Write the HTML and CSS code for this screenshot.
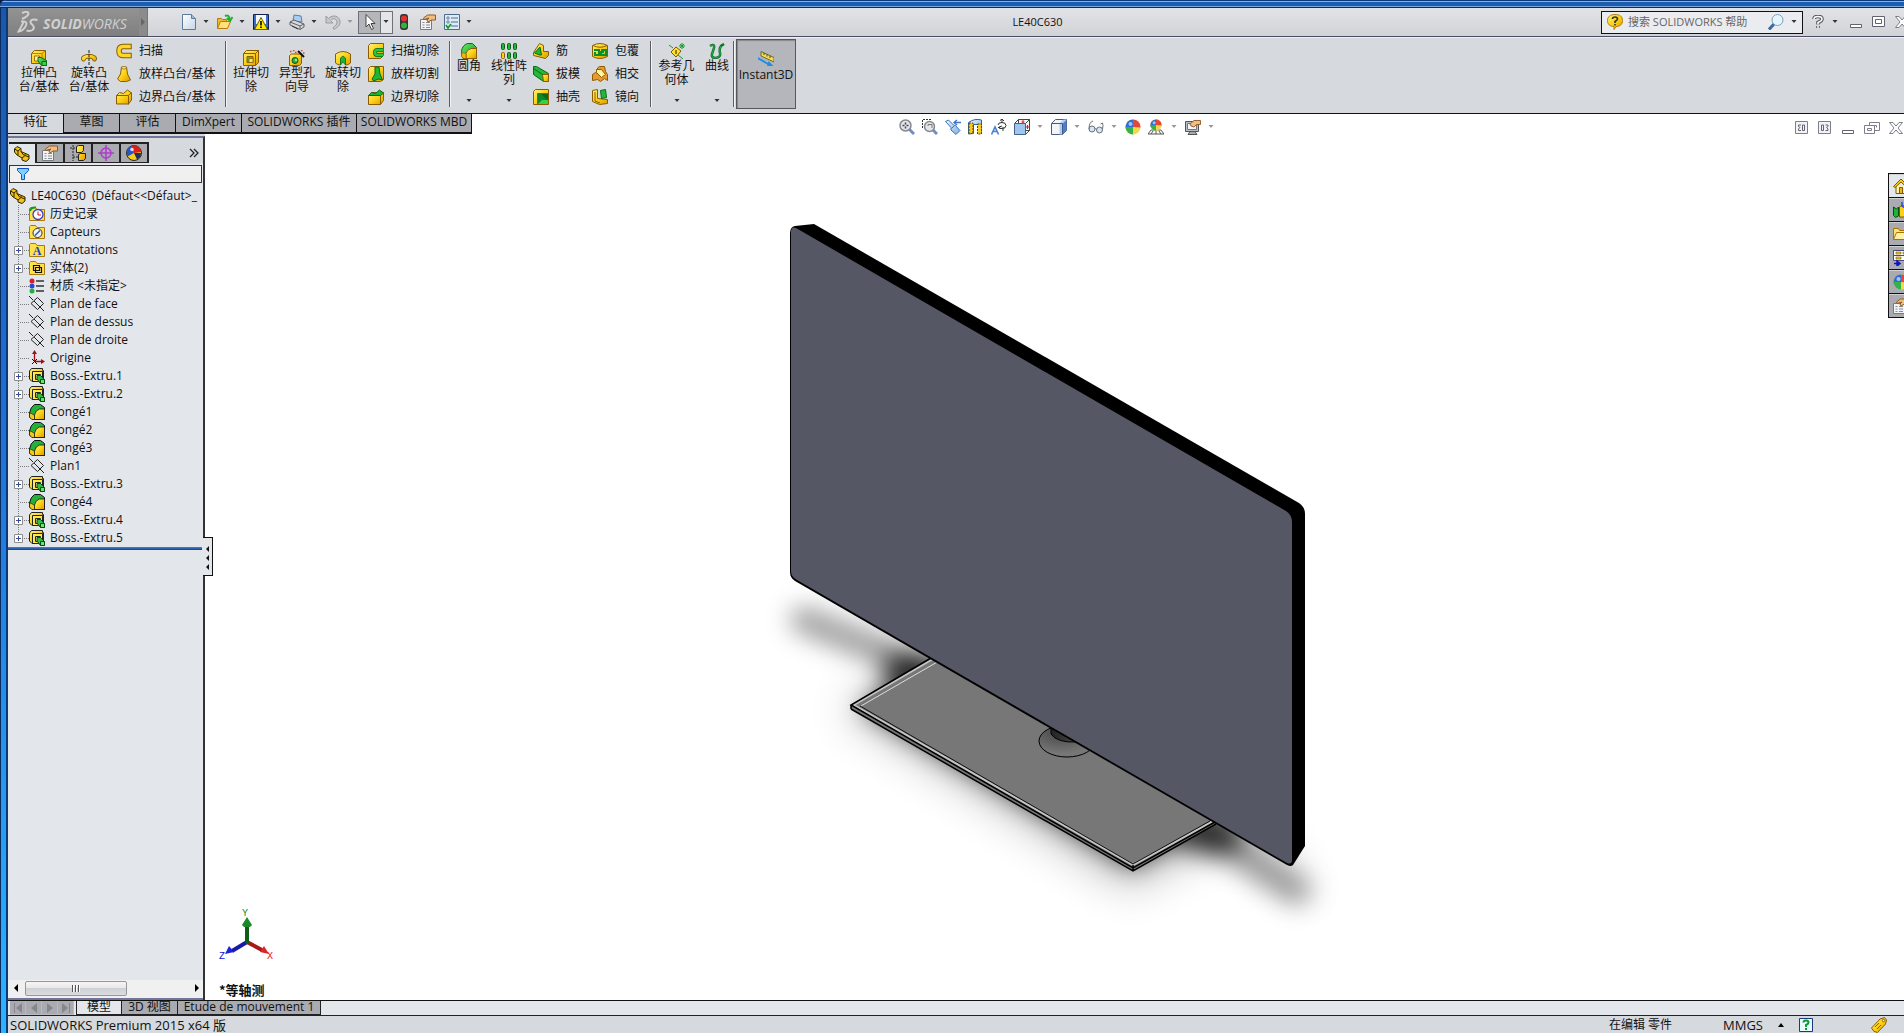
FILE: index.html
```html
<!DOCTYPE html>
<html lang="zh-CN">
<head>
<meta charset="utf-8">
<title>LE40C630</title>
<link rel="stylesheet" href="styles.css">
</head>
<body>
<svg class="defs" aria-hidden="true">
  <defs>
    <linearGradient id="gold" x1="0" y1="0" x2="1" y2="1"><stop offset="0" stop-color="#fff27a"/><stop offset=".5" stop-color="#fcd116"/><stop offset="1" stop-color="#d99a00"/></linearGradient>
    <linearGradient id="green" x1="0" y1="0" x2="1" y2="1"><stop offset="0" stop-color="#6be36b"/><stop offset="1" stop-color="#08a020"/></linearGradient>
    <linearGradient id="sky" x1="0" y1="0" x2="1" y2="1"><stop offset="0" stop-color="#e8f4ff"/><stop offset="1" stop-color="#7db0e6"/></linearGradient>
    <linearGradient id="paper" x1="0" y1="0" x2="1" y2="1"><stop offset="0" stop-color="#fff"/><stop offset="1" stop-color="#c3d6e8"/></linearGradient>
  </defs>
  <symbol id="caret" viewBox="0 0 10 6"><path d="M2.500 1h5L5 4z"/></symbol>
  <symbol id="new" viewBox="0 0 16 16"><path d="M1.500.5h9l4 4v11h-13z" fill="url(#paper)" stroke="#5d7c9c"/><path d="M10.500.5v4h4" fill="#9fb9d3" stroke="#5d7c9c"/></symbol>
  <symbol id="open" viewBox="0 0 16 16"><path d="M.5 14.500v-10h4l1 1h4v3" fill="#f0b72c" stroke="#b87a08"/><path d="M.5 14.500l3-7h10l-3 7z" fill="#ffe37a" stroke="#b87a08"/><path d="M8 2q4-2 4.500 3M10 4l3 3 2.500-4" fill="none" stroke="#21b02c" stroke-width="2"/></symbol>
  <symbol id="save" viewBox="0 0 16 16"><path d="M.5.5h15v15h-15z" fill="#3f6cc4" stroke="#10204e"/><path d="M3 1h10v9H3z" fill="#f4f7fc"/><path d="M1 14.500h14" stroke="#10204e" stroke-width="2"/><path d="M8 3.500l6.500 12h-13z" fill="#ffea00" stroke="#6a6000"/><path d="M7.200 7h1.600v4.500H7.200zM7.200 12.500h1.600V14H7.200z" fill="#000"/></symbol>
  <symbol id="print" viewBox="0 0 16 16"><path d="M4 7l1-6 7 1 1 6z" fill="#a9cdf3" stroke="#5b7fa8"/><path d="M1 8l4-2 10 4v3l-4 2.500L1 11z" fill="#d7d9dd" stroke="#5e6167"/><path d="M1 8l10 4 4-2M11 12v3" fill="none" stroke="#5e6167"/><path d="M3 12l6 3" stroke="#333"/></symbol>
  <symbol id="undo" viewBox="0 0 16 16"><path d="M1 2v7h7L5.500 6.500C8 3.500 12 5 12 8c0 3-2 4-4 5.500l1 2C13 13 15.500 11 15 7 14 2 8 0 3.500 4.500z" fill="#c5c7cb" stroke="#9a9ca1"/></symbol>
  <symbol id="cursor" viewBox="0 0 16 16"><path d="M5 .5v12.500l3-3 2.500 5.500 2-1-2.500-5h4z" fill="#fff" stroke="#444"/></symbol>
  <symbol id="traffic" viewBox="0 0 16 16"><rect x="4" y="0" width="8" height="16" rx="3" fill="#3a3335"/><circle cx="8" cy="4.500" r="3" fill="#e33232"/><circle cx="8" cy="11.500" r="3" fill="#29b63a"/></symbol>
  <symbol id="props" viewBox="0 0 16 16"><path d="M.5 5.500h11v10H.5z" fill="#f2f3f5" stroke="#777a80"/><path d="M2.500 8.500h2M6 8.500h4M2.500 11h2M6 11h4M2.500 13.500h2M6 13.500h4" stroke="#888b92"/><path d="M3.500 4l4-3h8v5h-4L8 8 7 6l2-2-5 1.500z" fill="#f0bd83" stroke="#8d5a28"/></symbol>
  <symbol id="list" viewBox="0 0 16 16"><path d="M.5.5h15v15H.5z" fill="#dcebf8" stroke="#4e6c8e"/><path d="M3 3h2v2H3zM3 7h2v2H3z" fill="#fff" stroke="#4e6c8e" stroke-width=".8"/><path d="M7 4h7M7 8h7M7 12h7" stroke="#4e6c8e"/><path d="M2 11l2 3 3-4" fill="none" stroke="#0a9b20" stroke-width="1.600"/></symbol>
  <symbol id="extrude" viewBox="0 0 16 16"><path d="M.5 3.500l3-3h11v9l-3 4H.5z" fill="url(#gold)" stroke="#8c5c00"/><path d="M.5 3.500h10.500v10M11 3.500l3.500-3" fill="none" stroke="#a87400" stroke-width=".8"/><path d="M3.500 6h5v5h-5z" fill="#fff2a0" stroke="#8c5c00" stroke-width=".8"/><path d="M7 7.500h3l5.500 3v5h-5L7 11z" fill="url(#green)" stroke="#0b6a18"/><path d="M11 11.500h4.500v4H11z" fill="#3ad04c" stroke="#0b6a18"/></symbol>
  <symbol id="extrude-dark" viewBox="0 0 16 16"><path d="M.5 3l2-2.500h11v2h1v11H3L.5 11z" fill="url(#gold)" stroke="#222"/><path d="M3.500 3.500h10v10h-10z" fill="#ffe84e" stroke="#222"/><path d="M6.500 6.500h5v5h-5z" fill="#fff6a8" stroke="#222"/><path d="M8 7.500h3.500l4 4v4h-4L8 11z" fill="#30c046" stroke="#064d10"/><path d="M11.500 11.500h4v4h-4z" fill="#6be37a" stroke="#064d10"/></symbol>
  <symbol id="revolve" viewBox="0 0 16 16"><path d="M5 8.500Q4 12 1.500 11-.5 9 1 6.500 8 2 15 6.500q1.500 2.500-.5 4.500-2.500 1-3.500-2.500-3-1-6 0z" fill="url(#gold)" stroke="#8c5c00"/><path d="M8 0v16" stroke="#222" stroke-dasharray="3 1"/></symbol>
  <symbol id="sweep" viewBox="0 0 16 16"><path d="M13 3.500H7q-4 0-4 4.500t4 4.500h6" fill="none" stroke="#8c5c00" stroke-width="5.500" stroke-linecap="square"/><path d="M13 3.500H7q-4 0-4 4.500t4 4.500h6" fill="none" stroke="#fcd62c" stroke-width="3.500" stroke-linecap="square"/></symbol>
  <symbol id="loft" viewBox="0 0 16 16"><path d="M5.500 1h5l1 7 3 6-4 1.500h-6L1.500 13l3-5z" fill="url(#gold)" stroke="#8c5c00"/><ellipse cx="8" cy="1.800" rx="2.500" ry="1.200" fill="#fff3a0" stroke="#8c5c00" stroke-width=".7"/></symbol>
  <symbol id="boundary" viewBox="0 0 16 16"><path d="M.5 6.500l3-3 4 1 4-3.500 4 3v7l-3 4H.5z" fill="url(#gold)" stroke="#8c5c00"/><path d="M.5 6.500h12l3-3M12.500 6.500v9" fill="none" stroke="#8c5c00"/></symbol>
  <symbol id="cut-boundary" viewBox="0 0 16 16"><path d="M.5 6.500l3-3h12v8l-3 4H.5z" fill="url(#gold)" stroke="#8c5c00"/><path d="M.5 6.500l3-3 4 1 4-3.500 4 3-3 2.500z" fill="#1fb534" stroke="#0b6a18"/><path d="M12.500 6.500v9" stroke="#8c5c00"/></symbol>
  <symbol id="cut-extrude" viewBox="0 0 16 16"><path d="M.5 3.500l3-3h12v12l-3 3H.5z" fill="url(#gold)" stroke="#8c5c00"/><path d="M.5 3.500h12v12M12.500 3.500l3-3" fill="none" stroke="#8c5c00"/><path d="M4 6.500h6v6H4z" fill="#5fae3a" stroke="#8c5c00"/><path d="M6 8.500h4v4H6z" fill="#ffe25c" stroke="#8c5c00" stroke-width=".7"/></symbol>
  <symbol id="hole" viewBox="0 0 16 16"><path d="M.5 5.500l2-1.500h10v9.500l-2 2H.5z" fill="url(#gold)" stroke="#8c5c00"/><circle cx="6" cy="10.500" r="3" fill="#2fa840" stroke="#0b5a18"/><circle cx="7" cy="10" r="1.200" fill="#8ff09a"/><path d="M9 1l6 6" stroke="#111" stroke-width="2"/><path d="M1 1.500h1.500M4 .5h1.500M6 2.500h1.500M12 .5h1.500M14 3h1.500" stroke="#e04020" stroke-width="1.500"/></symbol>
  <symbol id="cut-revolve" viewBox="0 0 16 16"><path d="M.5 4Q8-1 15.500 4v9q-2 2-5 2V9h-5v6q-3 0-5-2z" fill="url(#gold)" stroke="#8c5c00"/><path d="M5.500 15V8L8 6l2.500 2v7L8 12z" fill="#1fb534" stroke="#0b6a18" stroke-width=".7"/></symbol>
  <symbol id="cut-sweep" viewBox="0 0 16 16"><path d="M.5 2.500l2-2h13v12l-3 3H.5z" fill="url(#gold)" stroke="#8c5c00"/><path d="M15 7H9.500Q7 7 7 9.500T9.500 12H15" fill="none" stroke="#0b6a18" stroke-width="4"/><path d="M15 7H9.500Q7 7 7 9.500T9.500 12H15" fill="none" stroke="#2bc640" stroke-width="2.400"/></symbol>
  <symbol id="cut-loft" viewBox="0 0 16 16"><path d="M.5 2.500l2-2h13v13l-3 2H.5z" fill="url(#gold)" stroke="#8c5c00"/><path d="M7 1h4l1 7 2.500 6-4-1-5 2-1.500-2 3-5z" fill="#1fb534" stroke="#0b6a18"/></symbol>
  <symbol id="fillet" viewBox="0 0 16 16"><path d="M.5 8q1-6 6-7.500h5l4 4v11H2q-1.500-2-1.500-7z" fill="url(#green)" stroke="#0b6a18"/><path d="M5 15.500v-5q1-4 5-5h5.500v10z" fill="url(#gold)" stroke="#8c5c00"/><path d="M.7 9.500v4l2 2H5v-5z" fill="#f3b70c" stroke="#8c5c00" stroke-width=".6"/></symbol>
  <symbol id="fillet-dark" viewBox="0 0 16 16"><path d="M.5 9q1-6 5-8.500h6l4 3v12H3L.5 13z" fill="#23b13c" stroke="#111"/><path d="M5.500 15.500V11q1-5 5-6h5v10.500z" fill="url(#gold)" stroke="#111" stroke-width=".8"/><path d="M.5 9q2 0 5 2.500v4H3L.5 13z" fill="#f7c81a" stroke="#111" stroke-width=".6"/></symbol>
  <symbol id="pattern" viewBox="0 0 16 16"><g fill="#22b536" stroke="#0b5a18"><rect x=".5" y=".5" width="3" height="6" rx="1"/><rect x="6.500" y=".5" width="3" height="6" rx="1"/><rect x="12.500" y=".5" width="3" height="6" rx="1"/><rect x="6.500" y="9.500" width="3" height="6" rx="1"/><rect x="12.500" y="9.500" width="3" height="6" rx="1"/></g><rect x=".5" y="9.500" width="3" height="6" rx="1" fill="#fcd116" stroke="#8c5c00"/></symbol>
  <symbol id="rib" viewBox="0 0 16 16"><path d="M6.500.5l4 2v6h5v4l-3 3-12-3v-3z" fill="url(#gold)" stroke="#8c5c00"/><path d="M7 4l-5.500 6 5 2h2z" fill="#1fb534" stroke="#0b6a18"/></symbol>
  <symbol id="draft" viewBox="0 0 16 16"><path d="M.5.5h3l12 7v8h-5l-10-7z" fill="#23b83a" stroke="#0b6a18"/><path d="M9.500 8.500h6v7h-5z" fill="url(#gold)" stroke="#8c5c00"/><path d="M.5 2.500l9 6" stroke="#0b6a18"/></symbol>
  <symbol id="shell" viewBox="0 0 16 16"><path d="M.5 2.500l2-2h13v13l-2 2H.5z" fill="url(#gold)" stroke="#8c5c00"/><path d="M4.500 4.500h11v11h-11z" fill="#0e8a26"/><path d="M7.500 4.500h8v8z" fill="#0a6a1c"/><path d="M5 15l4-4h6v4z" fill="#35d04a"/><path d="M4.500 4.500v11h11v-11z" fill="none" stroke="#8c5c00"/></symbol>
  <symbol id="wrap" viewBox="0 0 16 16"><path d="M.5 2.500Q8-1.500 15.500 2.500v11q-7.500 4-15 0z" fill="url(#gold)" stroke="#8c5c00"/><path d="M1 2.500q7 3.500 14 0" fill="none" stroke="#8c5c00"/><path d="M2 7h5v5H3V9M9 7h5v5H9V9h3" fill="none" stroke="#08902a" stroke-width="2"/></symbol>
  <symbol id="intersect" viewBox="0 0 16 16"><path d="M.5 8.500l3-2 2 1V2l2-1.500h5l1 5 2 3v6l-3-2-4 3-3-2-5 1z" fill="#e79a2d" stroke="#8c5c00"/><path d="M4.500 3.500h5l4 5-4 3-5-5z" fill="#fff3a0" stroke="#8c5c00"/></symbol>
  <symbol id="mirror" viewBox="0 0 16 16"><path d="M.5 1.500l5-1v9l10 1v4l-8 1-7-3z" fill="url(#gold)" stroke="#8c5c00"/><path d="M8.500 1.500l5-1 1 8-5 1z" fill="#23b83a" stroke="#0b6a18"/><path d="M3 3v9l5 2" fill="none" stroke="#8c5c00"/></symbol>
  <symbol id="refgeo" viewBox="0 0 16 16"><path d="M2 9l5-5 5 4-5 6z" fill="#ffe22c" stroke="#7a5a00"/><path d="M7 7v2M6 10h2" stroke="#7a5a00" stroke-width="1.500"/><path d="M0 2l4 3M9 12l5 4M10 3h6M13 0v6M11 1l4 4M15 1l-4 4" stroke="#129a2a" stroke-width="1"/></symbol>
  <symbol id="curve" viewBox="0 0 16 16"><path d="M1 3q5-3 4 2-1 3-2 6-1 4 4 4 5-1 4-5-1-4 1-7l3-2" fill="none" stroke="#0d6f2a" stroke-width="2.500"/><path d="M1 3q5-3 4 2-1 3-2 6-1 4 4 4 5-1 4-5-1-4 1-7" fill="none" stroke="#2cae4c"/></symbol>
  <symbol id="instant" viewBox="0 0 16 16"><path d="M3 .5l13 6v4.500L3 5z" fill="#f3dd4a" stroke="#6e6630"/><path d="M6 2v2M9 3.500v2M12 5v2" stroke="#444"/><path d="M0 7l10 6" stroke="#1d8ee8" stroke-width="2"/><path d="M9 15l1.500-5 5 5z" fill="#1d8ee8"/></symbol>
  <symbol id="part" viewBox="0 0 16 16"><path d="M.5 3L3 .5l4 2v3l8 3.500v4L12 15.500 8 14v-2L3 9 .5 6z" fill="#f4c414" stroke="#2d2200"/><path d="M.5 3L4 5v4M4 5l3-2.500M8 12l3-2.500 4 1.500M7 5.500l3 4M11 9.500V8" fill="none" stroke="#2d2200"/></symbol>
  <symbol id="config" viewBox="0 0 16 16"><path d="M3 0v16M0 3h8M3 12h6" stroke="#222" stroke-dasharray="2 1"/><path d="M6.500 1.500l2-1h5v5l-2 2h-5zM8.500 9.500l2-1h5v5l-2 2h-5z" fill="url(#gold)" stroke="#222"/></symbol>
  <symbol id="dimx" viewBox="0 0 16 16"><circle cx="8" cy="8" r="5" fill="none" stroke="#b03bd0" stroke-width="1.500"/><path d="M8 0v16M0 8h16" stroke="#b03bd0" stroke-width="1.500"/></symbol>
  <symbol id="ball" viewBox="0 0 16 16"><circle cx="8" cy="8" r="7.500" fill="#f2d84c"/><path d="M8 8L1 10.500A7.500 7.500 0 0 1 8 .5z" fill="#2d6ed8"/><path d="M8 8V.5a7.500 7.500 0 0 1 7.500 8z" fill="#e2493a"/><path d="M8 8v7.500A7.500 7.500 0 0 1 .6 8z" fill="#35b34a"/><circle cx="5.500" cy="5" r="2" fill="#fff" opacity=".6"/></symbol>
  <symbol id="ball-dark" viewBox="0 0 16 16"><circle cx="8" cy="8" r="7.500" fill="#f5cf1a" stroke="#222"/><path d="M8 8L1.500 11.500Q-1 4 5 1z" fill="#2456c8"/><path d="M8 8L5 1q8-3 10.500 6z" fill="#d81e1e"/><path d="M8 8l7 0q0 4-4 6.500z" fill="#1d2e6a"/><circle cx="6" cy="4.500" r="1.800" fill="#fff" opacity=".8"/></symbol>
  <symbol id="funnel" viewBox="0 0 12 12"><path d="M.5.5h11v2L7.500 6.500v5h-3v-5l-4-4z" fill="#7fd0ff" stroke="#0a55c8"/></symbol>
  <symbol id="folder" viewBox="0 0 16 16"><path d="M.5 14.500v-12l1-1h5l1.500 2h7.500v11z" fill="#ffe14a" stroke="#a87a08"/></symbol>
  <symbol id="f-history" viewBox="0 0 16 16"><use href="#folder"/><circle cx="9" cy="8.500" r="5" fill="#fff" stroke="#3a3ad0" stroke-width="1.300"/><path d="M9 5.500V9h3" fill="none" stroke="#c01818"/><path d="M1 5q1-4 6-3.500" fill="none" stroke="#0a9b20" stroke-width="2"/></symbol>
  <symbol id="f-sensor" viewBox="0 0 16 16"><use href="#folder"/><circle cx="8.500" cy="9" r="4.500" fill="#f4f4f4" stroke="#333"/><path d="M6 11.500L11 6.500" stroke="#2456c8" stroke-width="1.500"/></symbol>
  <symbol id="f-solid" viewBox="0 0 16 16"><use href="#folder"/><path d="M4.500 5.500h6v5h-6zM6.500 7.500h6v5h-6z" fill="#ffe25c" stroke="#111" stroke-width="1.200"/></symbol>
  <symbol id="material" viewBox="0 0 16 16"><circle cx="3" cy="3" r="2.500" fill="#d81e2e"/><circle cx="3" cy="8" r="2.500" fill="#2a46d8"/><circle cx="3" cy="13" r="2.500" fill="#22b03a"/><path d="M7 3h8M7 8h8M7 13h8" stroke="#333" stroke-width="1.400"/></symbol>
  <symbol id="plane" viewBox="0 0 16 16"><path d="M2 7.500L8.500 1.500l6 6L8.500 13.500zM0 0l4 4M5 5l7 7M12 12l3 3" fill="none" stroke="#222"/></symbol>
  <symbol id="origin" viewBox="0 0 16 16"><path d="M5.500 11V2M6 11.500h8" stroke="#a01010" stroke-width="1.300" fill="none"/><path d="M3 4l2.500-4L8 4zM12 9l4 2.500-4 2.500z" fill="#a01010"/><path d="M3 9l5 5M8 9l-5 5" stroke="#111"/></symbol>
  <symbol id="branch" viewBox="0 0 20 18"><path d="M9.500 0v18M11 9.500h9" stroke="#7b7b7b" stroke-dasharray="1 1"/></symbol>
  <symbol id="branch-plus" viewBox="0 0 20 18"><path d="M9.500 0v18M11 9.500h9" stroke="#7b7b7b" stroke-dasharray="1 1"/><path d="M5.500 5.500h8v8h-8z" fill="#fff" stroke="#8e8e8e"/><path d="M7 9.500h5M9.500 7v5" stroke="#3a4a8c"/></symbol>
  <symbol id="branch-end" viewBox="0 0 20 18"><path d="M9.500 0v6M11 9.500h9" stroke="#7b7b7b" stroke-dasharray="1 1"/><path d="M5.500 5.500h8v8h-8z" fill="#fff" stroke="#8e8e8e"/><path d="M7 9.500h5M9.500 7v5" stroke="#3a4a8c"/></symbol>
  <symbol id="zoomfit" viewBox="0 0 16 16"><path d="M10 10l5 5" stroke="#6f8fc0" stroke-width="3"/><circle cx="6.500" cy="6.500" r="5.500" fill="#e3e6ea" stroke="#85888f" stroke-width="1.500"/><path d="M3.500 6.500h2M7.500 6.500h2M6.500 3.500v2M6.500 7.500v2" stroke="#444" stroke-width="1.500"/></symbol>
  <symbol id="zoomarea" viewBox="0 0 16 16"><path d="M.5 9V.5H10" fill="none" stroke="#333" stroke-dasharray="2 1"/><path d="M11 11l4 4" stroke="#6f8fc0" stroke-width="3"/><circle cx="7.500" cy="7.500" r="5" fill="#e3e6ea" stroke="#85888f" stroke-width="1.500"/><path d="M6 7V5.500h4V9" fill="none" stroke="#777"/></symbol>
  <symbol id="prevview" viewBox="0 0 16 16"><path d="M.5 2.500l3-1.500 5 5 2 .5 4.500 5-4 4-5-4.500L6 8.500z" fill="url(#sky)" stroke="#3a75b8"/><path d="M6.500 9.500l3-3" stroke="#3a75b8"/><path d="M9 3.500h7M12 1L9 3.500 12 6" fill="none" stroke="#3f78c8" stroke-width="1.400"/></symbol>
  <symbol id="section" viewBox="0 0 16 16"><path d="M.5 3.500q6-4.500 13-2.500v13l-3-1V5.500H5.500v9l-5 .5z" fill="url(#sky)" stroke="#2d62a8"/><path d="M1 4h4v10.500H1zM9.500 5h4v10h-4z" fill="#f6cb1c" stroke="#5a4800" stroke-dasharray="2 1"/></symbol>
  <symbol id="orient" viewBox="0 0 16 16"><path d="M.5 15.500L4 8l3.500 7.500M2 12.500h4" fill="none" stroke="#4a80d0" stroke-width="1.600"/><path d="M7 6q0-2.500 4-2.500t4 3-4 3-4-1.500M11 0v4M12 12V8M9 1.500L11 0l2 2M10 10l-2-2 3-1" fill="none" stroke="#333"/></symbol>
  <symbol id="viewcube" viewBox="0 0 16 16"><path d="M4.500.5h11v11h-11z M.5 4.500l4-4M11.500 4.500l4-4M11.500 15.500l4-4" fill="#f6f6f6" stroke="#444" /><path d="M.5 4.500h11v11H.5z" fill="#9fc6ee" stroke="#44638c"/><path d="M9 0v4M7.500 3h3M13.500 6v4M12 8h4" stroke="#d02020"/></symbol>
  <symbol id="shaded" viewBox="0 0 16 16"><path d="M.5 4.500l4-4h11v11l-4 4H.5z" fill="#f2f5fa" stroke="#4a5a7c"/><path d="M11.500 4.500l4-4v11l-4 4z" fill="#4d7ed0"/><path d="M8.500 4.500h3v11h-3zM8.500 4.500l4-4h3l-4 4z" fill="#a9cdf6"/><path d="M.5 4.500h11v11" fill="none" stroke="#4a5a7c"/></symbol>
  <symbol id="glasses" viewBox="0 0 16 16"><circle cx="4" cy="10" r="3" fill="#d5e6f4" stroke="#6a6f78"/><circle cx="11.500" cy="11" r="3" fill="#d5e6f4" stroke="#6a6f78"/><path d="M1 10Q1 3 5 2M7 10q1-1 1.500 0M14.500 10q1-4 0-6l-2 1" fill="none" stroke="#6a6f78"/></symbol>
  <symbol id="scene" viewBox="0 0 16 16"><path d="M0 15l3-4h10l3 4zM3 15l2-3M8 11v4M13 15l-2-3" fill="#fff" stroke="#555"/><svg x="2" y="0" width="12" height="12"><use href="#ball"/></svg></symbol>
  <symbol id="viewset" viewBox="0 0 16 16"><path d="M.5 2.500h13v10H.5z" fill="#b9bec8" stroke="#555"/><path d="M2.500 4.500h9v6h-9z" fill="#f4f6fa" stroke="#777"/><path d="M3 15.500h9l-2-3H5z" fill="#aaa" stroke="#555"/><path d="M5 5l4-3.500h6.500v4h-4L9 8l-3-1z" fill="#f0bd83" stroke="#9a6430"/></symbol>
  <symbol id="bubble" viewBox="0 0 16 16"><path d="M8 .5c5 0 7.500 2 7.500 6S13 12.500 9 12.500L7 15.500v-3C2.500 12.500.5 10 .5 6.500S3 .5 8 .5z" fill="url(#gold)" stroke="#b47e10"/><path d="M5.500 5q0-2 2.500-2t2.500 2Q10.500 6 8 7.500V9M8 10v1.500" fill="none" stroke="#333" stroke-width="1.600"/></symbol>
  <symbol id="lens" viewBox="0 0 16 16"><path d="M6 10l-5 5.500" stroke="#3a6c9c" stroke-width="3"/><circle cx="9.500" cy="6" r="5.500" fill="#e6f4fd" stroke="#7ca0bd"/></symbol>
  <symbol id="question" viewBox="0 0 12 14"><path d="M2 4q0-2.500 4-2.500T10 4Q10 6 6 7.500V9.500M6 11v2" fill="none" stroke="#55565f" stroke-width="3.600"/><path d="M2 4q0-2.500 4-2.500T10 4Q10 6 6 7.500V9.500M6 11v2" fill="none" stroke="#fff" stroke-width="1.500"/></symbol>
  <symbol id="min" viewBox="0 0 14 14"><path d="M1.500 9.500h11v3h-11z" fill="#fff" stroke="#62636f"/></symbol>
  <symbol id="max" viewBox="0 0 14 14"><path d="M.5 1.500h12v10H.5z" fill="#fff" stroke="#62636f" /><path d="M3.500 4.500h6v4h-6z" fill="none" stroke="#62636f"/></symbol>
  <symbol id="restore" viewBox="0 0 16 14"><path d="M5.500 1.500h10v8h-10zM8.500 4.500h4v2" fill="#fff" stroke="#7d7e88"/><path d="M.5 4.500h10v8H.5zM3.500 7.500h4v2h-4z" fill="#fff" stroke="#7d7e88"/></symbol>
  <symbol id="close" viewBox="0 0 14 14"><path d="M.5 1.500h3.500l3 3.500 3-3.500h3.500L9 7l4.500 5.500H10L7 9l-3 3.500H.5L5 7z" fill="#fff" stroke="#7d7e88"/></symbol>
  <symbol id="paneleft" viewBox="0 0 14 14"><path d="M.5.5h12v12H.5z" fill="#f2f3f6" stroke="#7d7e88"/><path d="M6 4H3.500v1.500L5 6.500 3.500 8V9.500H6M7.500 4h2v5.500h-2z" fill="none" stroke="#62636f"/></symbol>
  <symbol id="paneright" viewBox="0 0 14 14"><path d="M.5.5h12v12H.5z" fill="#f2f3f6" stroke="#7d7e88"/><path d="M7.500 4H10v1.500L8.500 6.500 10 8V9.500H7.500M3.500 4h2v5.500h-2z" fill="none" stroke="#62636f"/></symbol>
  <symbol id="home" viewBox="0 0 16 16"><path d="M3 8v7.500h10V8" fill="#fff4b0" stroke="#7a5800"/><path d="M.5 8.500L8 1l7.500 7.500-1.500 1L8 4 2 9.500z" fill="#fcd116" stroke="#7a5800"/><path d="M6.500 9.500h3v6h-3z" fill="#f0b72c" stroke="#7a5800"/></symbol>
  <symbol id="library" viewBox="0 0 16 16"><path d="M.5 5l3 2 2-2v9l-3 1.500-2-2z" fill="#1fb534" stroke="#064d10"/><path d="M6.500 5l3-2 3 2v10h-6z" fill="#fcd116" stroke="#7a5800"/><path d="M9 0v4l3 2" fill="none" stroke="#2d50c0" stroke-width="1.500"/></symbol>
  <symbol id="folder-open" viewBox="0 0 16 16"><path d="M.5 13.500v-11h5l1 2h8v9z" fill="#ffe37a" stroke="#a87400"/><path d="M.5 13.500l3-7h12l-3 7z" fill="#fff2a8" stroke="#a87400"/></symbol>
  <symbol id="palette" viewBox="0 0 16 16"><path d="M.5.5h15v10H.5zM.5 5.500h15" fill="#fff" stroke="#444c7c"/><path d="M3 2h5v2H3zM3 7h5v2H3zM10 2h4v2h-4z" fill="#f6cb1c" stroke="#7a5800" stroke-width=".6"/><path d="M1 13.500h5M4 11l3 2.500L4 16z" fill="#1010c8" stroke="#1010c8" stroke-width="1.500"/></symbol>
  <symbol id="helpbox" viewBox="0 0 14 14"><path d="M.5.5h13v13H.5z" fill="#e6faff" stroke="#1b3a7c"/><path d="M4.500 4.500q0-2 2.500-2t2.500 2Q9.500 6 7 7v2M7 10v2" fill="none" stroke="#0c9a2c" stroke-width="2"/></symbol>
  <symbol id="tag" viewBox="0 0 16 16"><path d="M.5 11L9 2l4.500-1.500L15.500 3l-1 4-8 8.500q-4 0-6-4.500z" fill="url(#gold)" stroke="#8c5c00"/><circle cx="12.500" cy="3.500" r="1.200" fill="#fff" stroke="#8c5c00"/><path d="M4 10l4-4M6 12l4-4" stroke="#8c5c00"/></symbol>
</svg>

<div class="window">
  <header class="titlebar">
    <div class="brand">
      <svg class="ds" viewBox="0 0 22 22" aria-hidden="true"><path d="M5 2q6-2.500 6.500.5Q11 5.500 5 8M4 10.500h3q4 .5 1.500 5Q6 20 1.500 20.500l5-9M20.500 9q-6-1.500-7 1.500-.5 1.500 2.500 4 2 2.500-.5 4.500-2.500 1.500-6 .5" fill="none" stroke="#d0d0d0" stroke-width="2"/></svg>
      <span><b>SOLID</b>WORKS</span>
    </div>
    <button class="brand-arrow" aria-label="菜单"><svg viewBox="0 0 6 8"><path d="M1 0l4 4-4 4z" fill="#666"/></svg></button>
    <nav class="quick">
      <button class="tool"><svg class="i"><use href="#new"/></svg><svg class="c"><use href="#caret"/></svg></button>
      <button class="tool"><svg class="i"><use href="#open"/></svg><svg class="c"><use href="#caret"/></svg></button>
      <button class="tool"><svg class="i"><use href="#save"/></svg><svg class="c"><use href="#caret"/></svg></button>
      <button class="tool"><svg class="i"><use href="#print"/></svg><svg class="c"><use href="#caret"/></svg></button>
      <button class="tool off"><svg class="i"><use href="#undo"/></svg><svg class="c"><use href="#caret"/></svg></button>
    </nav>
    <nav class="quick2">
      <button class="select"><span><svg class="i"><use href="#cursor"/></svg></span><svg class="c"><use href="#caret"/></svg></button>
      <button class="tool"><svg class="i"><use href="#traffic"/></svg></button>
      <button class="tool"><svg class="i"><use href="#props"/></svg></button>
      <button class="tool"><svg class="i"><use href="#list"/></svg><svg class="c"><use href="#caret"/></svg></button>
    </nav>
    <h1>LE40C630</h1>
    <form class="search">
      <svg class="i"><use href="#bubble"/></svg>
      <input type="text" aria-label="搜索" placeholder="搜索 SOLIDWORKS 帮助">
      <svg class="i"><use href="#lens"/></svg><svg class="c"><use href="#caret"/></svg>
    </form>
    <div class="winctl">
      <button class="tool" aria-label="帮助"><svg class="q"><use href="#question"/></svg><svg class="c"><use href="#caret"/></svg></button>
      <button aria-label="最小化"><svg class="w"><use href="#min"/></svg></button>
      <button aria-label="最大化"><svg class="w"><use href="#max"/></svg></button>
      <button aria-label="关闭"><svg class="w"><use href="#close"/></svg></button>
    </div>
  </header>

  <section class="ribbon">
    <div class="group g1">
      <button class="big low"><svg class="i"><use href="#extrude"/></svg>拉伸凸<br>台/基体</button>
      <button class="big low"><svg class="i"><use href="#revolve"/></svg>旋转凸<br>台/基体</button>
      <div class="stack">
        <button><svg class="i"><use href="#sweep"/></svg>扫描</button>
        <button><svg class="i"><use href="#loft"/></svg>放样凸台/基体</button>
        <button><svg class="i"><use href="#boundary"/></svg>边界凸台/基体</button>
      </div>
    </div>
    <div class="group g2">
      <button class="big low"><svg class="i"><use href="#cut-extrude"/></svg>拉伸切<br>除</button>
      <button class="big low"><svg class="i"><use href="#hole"/></svg>异型孔<br>向导</button>
      <button class="big low"><svg class="i"><use href="#cut-revolve"/></svg>旋转切<br>除</button>
      <div class="stack">
        <button><svg class="i"><use href="#cut-sweep"/></svg>扫描切除</button>
        <button><svg class="i"><use href="#cut-loft"/></svg>放样切割</button>
        <button><svg class="i"><use href="#cut-boundary"/></svg>边界切除</button>
      </div>
    </div>
    <div class="group g3">
      <button class="big"><svg class="i"><use href="#fillet"/></svg>圆角<svg class="c"><use href="#caret"/></svg></button>
      <button class="big wide"><svg class="i"><use href="#pattern"/></svg>线性阵<br>列<svg class="c"><use href="#caret"/></svg></button>
      <div class="stack">
        <button><svg class="i"><use href="#rib"/></svg>筋</button>
        <button><svg class="i"><use href="#draft"/></svg>拔模</button>
        <button><svg class="i"><use href="#shell"/></svg>抽壳</button>
      </div>
      <div class="stack">
        <button><svg class="i"><use href="#wrap"/></svg>包覆</button>
        <button><svg class="i"><use href="#intersect"/></svg>相交</button>
        <button><svg class="i"><use href="#mirror"/></svg>镜向</button>
      </div>
    </div>
    <div class="group g4">
      <button class="big wide"><svg class="i"><use href="#refgeo"/></svg>参考几<br>何体<svg class="c"><use href="#caret"/></svg></button>
      <button class="big"><svg class="i"><use href="#curve"/></svg>曲线<svg class="c"><use href="#caret"/></svg></button>
    </div>
    <button class="instant"><svg class="i"><use href="#instant"/></svg>Instant3D</button>
  </section>

  <div class="tabrow">
    <nav class="tabs">
      <button class="on">特征</button><button>草图</button><button>评估</button><button class="mid">DimXpert</button><button class="long">SOLIDWORKS 插件</button><button class="long">SOLIDWORKS MBD</button>
    </nav>
    <nav class="headsup">
      <button><svg class="i"><use href="#zoomfit"/></svg></button>
      <button><svg class="i"><use href="#zoomarea"/></svg></button>
      <button><svg class="i"><use href="#prevview"/></svg></button>
      <button><svg class="i"><use href="#section"/></svg></button>
      <button><svg class="i"><use href="#orient"/></svg></button>
      <button><svg class="i"><use href="#viewcube"/></svg><svg class="c"><use href="#caret"/></svg></button>
      <button><svg class="i"><use href="#shaded"/></svg><svg class="c"><use href="#caret"/></svg></button>
      <button><svg class="i"><use href="#glasses"/></svg><svg class="c"><use href="#caret"/></svg></button>
      <button><svg class="i"><use href="#ball"/></svg></button>
      <button><svg class="i"><use href="#scene"/></svg><svg class="c"><use href="#caret"/></svg></button>
      <button><svg class="i"><use href="#viewset"/></svg><svg class="c"><use href="#caret"/></svg></button>
    </nav>
    <nav class="docctl">
      <button><svg class="w"><use href="#paneleft"/></svg></button>
      <button><svg class="w"><use href="#paneright"/></svg></button>
      <button><svg class="w"><use href="#min"/></svg></button>
      <button><svg class="i"><use href="#restore"/></svg></button>
      <button><svg class="w"><use href="#close"/></svg></button>
    </nav>
  </div>

  <main class="work">
    <aside class="panel">
      <nav class="ptabs">
        <button class="on"><svg class="i"><use href="#part"/></svg></button>
        <button><svg class="i"><use href="#props"/></svg></button>
        <button><svg class="i"><use href="#config"/></svg></button>
        <button><svg class="i"><use href="#dimx"/></svg></button>
        <button><svg class="i"><use href="#ball-dark"/></svg></button>
        <button class="more" aria-label="更多"><svg viewBox="0 0 10 10"><path d="M1 1l4 4-4 4M5 1l4 4-4 4" fill="none" stroke="#222" stroke-width="1.300"/></svg></button>
      </nav>
      <label class="filter"><svg><use href="#funnel"/></svg><input type="text" aria-label="过滤"></label>
      <div class="root"><svg class="i"><use href="#part"/></svg><span>LE40C630&nbsp; (Défaut&lt;&lt;Défaut&gt;_</span></div>
      <ul class="tree">
        <li><svg class="b"><use href="#branch"/></svg><svg class="i"><use href="#f-history"/></svg>历史记录</li>
        <li><svg class="b"><use href="#branch"/></svg><svg class="i"><use href="#f-sensor"/></svg>Capteurs</li>
        <li><svg class="b"><use href="#branch-plus"/></svg><svg class="i" viewBox="0 0 16 16"><use href="#folder"/><text x="8" y="13" text-anchor="middle" class="glyph-a">A</text></svg>Annotations</li>
        <li><svg class="b"><use href="#branch-plus"/></svg><svg class="i"><use href="#f-solid"/></svg>实体(2)</li>
        <li><svg class="b"><use href="#branch"/></svg><svg class="i"><use href="#material"/></svg>材质 &lt;未指定&gt;</li>
        <li><svg class="b"><use href="#branch"/></svg><svg class="i"><use href="#plane"/></svg>Plan de face</li>
        <li><svg class="b"><use href="#branch"/></svg><svg class="i"><use href="#plane"/></svg>Plan de dessus</li>
        <li><svg class="b"><use href="#branch"/></svg><svg class="i"><use href="#plane"/></svg>Plan de droite</li>
        <li><svg class="b"><use href="#branch"/></svg><svg class="i"><use href="#origin"/></svg>Origine</li>
        <li><svg class="b"><use href="#branch-plus"/></svg><svg class="i"><use href="#extrude-dark"/></svg>Boss.-Extru.1</li>
        <li><svg class="b"><use href="#branch-plus"/></svg><svg class="i"><use href="#extrude-dark"/></svg>Boss.-Extru.2</li>
        <li><svg class="b"><use href="#branch"/></svg><svg class="i"><use href="#fillet-dark"/></svg>Congé1</li>
        <li><svg class="b"><use href="#branch"/></svg><svg class="i"><use href="#fillet-dark"/></svg>Congé2</li>
        <li><svg class="b"><use href="#branch"/></svg><svg class="i"><use href="#fillet-dark"/></svg>Congé3</li>
        <li><svg class="b"><use href="#branch"/></svg><svg class="i"><use href="#plane"/></svg>Plan1</li>
        <li><svg class="b"><use href="#branch-plus"/></svg><svg class="i"><use href="#extrude-dark"/></svg>Boss.-Extru.3</li>
        <li><svg class="b"><use href="#branch"/></svg><svg class="i"><use href="#fillet-dark"/></svg>Congé4</li>
        <li><svg class="b"><use href="#branch-plus"/></svg><svg class="i"><use href="#extrude-dark"/></svg>Boss.-Extru.4</li>
        <li><svg class="b"><use href="#branch-end"/></svg><svg class="i"><use href="#extrude-dark"/></svg>Boss.-Extru.5</li>
      </ul>
      <div class="rollback"></div>
      <div class="hscroll">
        <button aria-label="向左"><svg viewBox="0 0 6 8"><path d="M5 0v8L1 4z"/></svg></button>
        <div class="thumb"><i></i><i></i><i></i></div>
        <button aria-label="向右"><svg viewBox="0 0 6 8"><path d="M1 0v8l4-4z"/></svg></button>
      </div>
    </aside>
    <section class="viewport">
      <svg class="model" viewBox="205 136 1699 864" role="img" aria-label="LE40C630">
        <defs>
          <filter id="soft" x="-50%" y="-50%" width="200%" height="200%"><feGaussianBlur stdDeviation="12"/></filter>
          <filter id="wide" x="-50%" y="-50%" width="200%" height="200%"><feGaussianBlur stdDeviation="22"/></filter>
          <linearGradient id="neck" x1="0" x2="1"><stop offset="0" stop-color="#222"/><stop offset="1" stop-color="#666"/></linearGradient>
          <radialGradient id="disc" cx=".4" cy=".2" r=".7"><stop offset="0" stop-color="#444"/><stop offset="1" stop-color="#777"/></radialGradient>
        </defs>
        <path d="M790 610L930 660 840 710 1130 890 1230 835 1320 905 1240 800z" fill="#000" opacity=".22" filter="url(#wide)"/>
        <g filter="url(#soft)">
          <path d="M804 620L925 668" stroke="#000" stroke-width="28" stroke-linecap="round" opacity=".36"/>
          <path d="M890 655h70l-60 36-20-16z" opacity=".75"/>
          <path d="M1205 830L1296 890" stroke="#000" stroke-width="30" stroke-linecap="round" opacity=".36"/>
          <path d="M1170 845l60-35 16 34-30 12z" opacity=".7"/>
          <path d="M860 708L1133 868l84-50-100-60-200-90z" fill="#000" opacity=".7"/>
        </g>
        <path d="M931 658L851 705v4l282 162 84-47-6-10-220-150z" fill="#777"/>
        <path d="M933 659L854 705l279 160 82-45" fill="none" stroke="#c4c4c4" stroke-width="2"/>
        <path d="M939 661L861 706" stroke="#ddd"/>
        <path d="M860 706l273 158 77-43" fill="none" stroke="#111"/>
        <path d="M931 658L851 705l282 163 82-46M851 709l282 162 83-47M851 705v4M1133 865v6" fill="none" stroke="#000" stroke-width="1.500"/>
        <ellipse cx="1067" cy="741" rx="28" ry="16" fill="url(#disc)" stroke="#000"/>
        <path d="M1051 728v6q6 9 26 8l20-4-30-20z" fill="url(#neck)" stroke="#000"/>
        <path d="M790 233q0-6 5-7l19-2L1299 503q6 4 6 11V846L1293 865q-2 2-6 0L795 581q-5-3-5-9z" fill="#000"/>
        <path d="M791 232q0-6 5-4L1286 511q6 4 6 11V860q0 5-5 3L797 580q-6-3-6-9z" fill="#565764"/>
      </svg>
      <svg class="triad" viewBox="0 0 60 60" aria-hidden="true">
        <path d="M29 35L14 44" stroke="#1a1aa8" stroke-width="4"/><path d="M7 47l4-8 5 6z" fill="#2222d0"/>
        <path d="M29 35l15 8" stroke="#a81818" stroke-width="4"/><path d="M51 47l-5-8-4 6z" fill="#d82828"/>
        <path d="M29 36V20" stroke="#0d5c18" stroke-width="4"/><path d="M24 18l5-8 5 8-2 2h-6z" fill="#188a28"/>
        <text x="24" y="9" fill="#0a8a1a">Y</text><text x="1" y="52" fill="#1111dd">Z</text><text x="49" y="52" fill="#ee1111">X</text>
      </svg>
      <p class="viewname">*等轴测</p>
      <nav class="taskpane">
        <button class="on"><svg class="i"><use href="#home"/></svg></button>
        <button><svg class="i"><use href="#library"/></svg></button>
        <button><svg class="i"><use href="#folder-open"/></svg></button>
        <button><svg class="i"><use href="#palette"/></svg></button>
        <button><svg class="i"><use href="#ball"/></svg></button>
        <button><svg class="i"><use href="#props"/></svg></button>
      </nav>
      <button class="handle" aria-label="折叠面板"><svg viewBox="0 0 8 36"><path d="M6 7v6L3 10zM6 16v6L3 19zM6 25v6L3 28z" fill="#111"/></svg></button>
    </section>
  </main>

  <nav class="sheets">
    <button class="nav"><svg viewBox="0 0 10 10"><path d="M1 0h1v10H1zM9 0v10L3 5z"/></svg></button>
    <button class="nav"><svg viewBox="0 0 10 10"><path d="M8 0v10L2 5z"/></svg></button>
    <button class="nav"><svg viewBox="0 0 10 10"><path d="M2 0v10l6-5z"/></svg></button>
    <button class="nav"><svg viewBox="0 0 10 10"><path d="M1 0v10l6-5zM8 0h1v10H8z"/></svg></button>
    <button class="sheet on">模型</button><button class="sheet">3D 视图</button><button class="sheet last">Etude de mouvement 1</button>
  </nav>
  <footer class="status">
    <span class="product">SOLIDWORKS Premium 2015 x64 版</span>
    <span class="mode">在编辑 零件</span>
    <button class="units">MMGS<svg viewBox="0 0 6 4"><path d="M0 4h6L3 0z"/></svg></button>
    <svg class="help"><use href="#helpbox"/></svg>
    <svg class="i"><use href="#tag"/></svg>
  </footer>
</div>
</body>
</html>
```
FILE: styles.css
```css
* { box-sizing: border-box; margin: 0; padding: 0; }
html, body { height: 100%; overflow: hidden; }
body {
  background: #0b1d3c;
  font: 12px/16px "Open Sans", "Noto Sans CJK SC", sans-serif;
  color: #111;
}
button {
  font: inherit; color: inherit; background: none; border: 0;
  display: flex; align-items: center; flex: none; white-space: nowrap;
}
svg { display: block; flex: none; }
input { font: inherit; border: 0; background: none; outline: 0; min-width: 0; }
.defs { position: absolute; width: 0; height: 0; }
.glyph-a { font: bold 12px "Liberation Serif", serif; fill: #1a3fd0; }
.i { width: 16px; height: 16px; }
.c { width: 10px; height: 6px; fill: #333; }
.w { width: 14px; height: 14px; }

/* window frame */
.window {
  height: 100vh; display: flex; flex-direction: column;
  border-radius: 6px 0 0 0; padding: 8px 0 0 8px;
  background:
    linear-gradient(#0c2a5c, #0c2a5c) 0 7px / 100% 1px no-repeat,
    linear-gradient(#7db4ea 0 1px, #1d5cb0 1px 5px, #7aa8dc 5px 6px) 0 1px / 100% 6px no-repeat,
    linear-gradient(90deg, #0a2c5c 0 1px, transparent 1px 6px, #0a3a78 6px 8px),
    linear-gradient(#1b56ac, #1f6fd6 40%, #2cb4ff);
}

/* title bar */
.titlebar {
  display: flex; align-items: center; height: 29px; flex: none;
  background: linear-gradient(#e2e3e5, #d2d3d8); border-bottom: 1px solid #4b4e63; overflow: hidden;
}
.brand {
  display: flex; align-items: center; gap: 4px; width: 131px; height: 28px; padding-left: 9px;
  background: linear-gradient(#939393, #7f7f7f); color: #d0d0d0;
  font: italic 14px/20px "Open Sans", sans-serif;
}
.brand span { padding-top: 4px; }
.ds { width: 22px; height: 22px; }
.brand-arrow { width: 9px; height: 28px; justify-content: center; background: #8b8b8b; border-right: 1px solid #777; }
.brand-arrow svg { width: 6px; height: 8px; }
.quick { display: flex; gap: 6px; padding-left: 33px; }
.tool { gap: 4px; }
.off .c { fill: #999; }
.quick2 { display: flex; align-items: center; gap: 8px; padding-left: 3px; }
.quick2 .select { height: 23px; border: 1px solid #6f7178; background: #e4e5e8; margin-right: -5px; padding-right: 1px; }
.select span { background: #b4b6ba; height: 21px; padding: 2px; border-right: 1px solid #6f7178; width: 22px; }
.titlebar h1 { flex: 1; text-align: center; font-size: 11px; font-weight: 400; }
.search {
  display: flex; align-items: center; width: 202px; height: 23px; padding: 0 2px 0 5px;
  background: #ebecf0; border: 1px solid #111;
}
.search input { flex: 1; font-size: 11px; padding-left: 5px; color: #555; }
.search input::placeholder { color: #666; opacity: 1; }
.search .c { margin: 0 1px 0 5px; }
.winctl { display: flex; align-items: center; gap: 9px; padding-left: 9px; margin-right: -5px; }
.winctl .tool { gap: 6px; }
.q { width: 12px; height: 14px; }

/* ribbon */
.ribbon { display: flex; height: 76px; flex: none; background: #d6d9de; border-top: 1px solid #eef0f3; }
.group { display: flex; padding: 3px 0 6px; }
.group::after { content: ""; width: 2px; height: 66px; background: linear-gradient(90deg, #5b5d63 0 1px, #f2f3f5 1px); }
.big { flex-direction: column; width: 46px; line-height: 14px; padding-top: 2px; }
.big.low { padding-top: 9px; }
.big .c { margin-top: auto; margin-bottom: 3px; }
.stack { display: flex; flex-direction: column; padding-left: 2px; padding-top: 1px; }
.stack button { gap: 7px; height: 23px; padding-bottom: 5px; }
.g1 { padding-left: 6px; }
.g1 .big { width: 50px; }
.g1 .stack { width: 111px; }
.g2 { padding-left: 1px; }
.g2 .stack { width: 83px; }
.g3 .big { width: 36px; }
.g3 .wide { width: 44px; }
.g3 .stack { width: 59px; }
.g3 .stack:last-child { width: 60px; }
.g4 .big { width: 32px; }
.g4 .wide { width: 49px; }
.instant {
  flex-direction: column; width: 60px; height: 70px; margin: 1px; padding-top: 11px;
  background: #b4b6bb; border: 1px solid #55575d; box-shadow: inset 1px 1px 1px #888;
}

/* command tabs and view toolbar */
.tabrow {
  display: flex; align-items: flex-start; height: 23px; flex: none; border-top: 1px solid #111; overflow: hidden;
  background: linear-gradient(#d6d9de, #d6d9de) 0 0 / 197px 100% no-repeat #fff;
}
.tabs { display: flex; width: 891px; flex: none; }
.tabs button {
  justify-content: center; width: 56px; height: 20px; padding-bottom: 3px;
  background: #a9abb0; border: 1px solid #111; border-width: 0 1px 2px 0;
}
.tabs button.on { background: #d6d9de; border-bottom-width: 1px; }
.tabs button.mid { width: 66px; }
.tabs button.long { width: 115px; }
.headsup { display: flex; gap: 7px; padding-top: 5px; flex: 1; }
.headsup button { gap: 5px; }
.headsup .c { fill: #999; }
.headsup button:has(.c) { margin-right: -1px; }
.docctl { display: flex; gap: 9px; padding-top: 6px; margin-right: 1px; }

/* feature manager */
.work { display: flex; flex: 1; min-height: 0; }
.panel {
  width: 197px; flex: none; display: flex; flex-direction: column; background: #e3e6eb;
  border-right: 2px solid #333; border-top: 2px double #71759a;
}
.ptabs { display: flex; height: 25px; padding: 4px 4px 0 1px; background: #d6d9de; flex: none; }
.ptabs button { width: 28px; height: 21px; justify-content: center; background: #a9abb0; border: 1px solid #222; border-width: 2px 2px 1px 0; }
.ptabs button.on { background: #e3e6eb; border-bottom: 0; }
.ptabs .more { width: 10px; background: none; border: 0; margin-left: auto; }
.more svg { width: 10px; height: 10px; }
.filter { display: flex; align-items: center; height: 18px; margin: 2px 1px 4px; padding-left: 7px; background: #f0f0f0; border: 1px solid #333; flex: none; }
.filter svg { width: 12px; height: 12px; }
.filter input { flex: 1; height: 14px; }
.root { display: flex; align-items: center; gap: 5px; height: 18px; padding-left: 2px; overflow: hidden; white-space: nowrap; flex: none; }
.root span { flex: none; }
.tree { list-style: none; padding-left: 1px; }
.tree li { display: flex; align-items: center; height: 18px; white-space: nowrap; }
.tree .i { margin-right: 5px; }
.b { width: 20px; height: 18px; }
.rollback { height: 3px; margin-right: 1px; background: linear-gradient(#3f83e0, #1c3f78); flex: none; }
.hscroll { margin-top: auto; display: flex; align-items: center; height: 20px; padding-bottom: 2px; background: #f0f0f0; border-bottom: 2px double #71759a; flex: none; }
.hscroll button { width: 16px; justify-content: center; }
.hscroll button:last-child { margin-left: auto; width: 12px; }
.hscroll button svg { width: 6px; height: 8px; }
.thumb {
  width: 102px; height: 15px; margin-left: 1px; display: flex; align-items: center; justify-content: center; gap: 1px;
  background: linear-gradient(#f5f5f5, #e6e7ea 50%, #cfd0d4 50%, #dcdde0); border: 1px solid #979797; border-radius: 2px;
}
.thumb i { width: 2px; height: 7px; background: #555; border-right: 1px solid #fff; }

/* graphics area */
.viewport { position: relative; flex: 1; min-width: 0; background: #fff; }
.model { width: 100%; height: 100%; }
.triad { position: absolute; left: 13px; bottom: 33px; width: 60px; height: 60px; font: 10px "Liberation Mono", monospace; }
.viewname { position: absolute; left: 14px; bottom: 2px; font: bold 13px/16px "Noto Sans CJK SC", sans-serif; }
.handle { position: absolute; left: -2px; top: 401px; width: 10px; height: 39px; background: #e3e6eb; border: 1px solid #111; border-left: 0; }
.handle svg { width: 8px; height: 36px; }
.taskpane { position: absolute; right: 0; top: 37px; width: 16px; border: 1px solid #111; border-right: 0; }
.taskpane button { width: 15px; height: 24px; padding-left: 4px; overflow: hidden; background: #a9abb0; border-bottom: 1px solid #111; box-shadow: inset 0 1px #d0d1d4; }
.taskpane button.on { background: #e3e6eb; }
.taskpane button:last-child { height: 23px; border-bottom: 0; }

/* sheet tabs and status bar */
.sheets { display: flex; height: 16px; flex: none; background: #e3e6eb; border-top: 1px solid #111; border-bottom: 1px solid #222; padding-left: 2px; }
.sheets button { height: 14px; line-height: 14px; justify-content: center; background: #a9abb0; border-right: 1px solid #222; }
.sheets .nav { width: 16px; border: 1px solid #b9bbc0; border-width: 0 1px 1px 0; }
.nav svg { width: 10px; height: 10px; fill: #85878d; }
.sheets .sheet { width: 56px; border-bottom: 1px solid #222; padding-bottom: 2px; }
.sheets .sheet.on { width: 46px; margin-left: 2px; background: #e3e6eb; border-left: 1px solid #222; }
.sheets .sheet.last { width: 143px; }
.status { display: flex; align-items: center; height: 17px; flex: none; background: #d6d9de; padding-left: 2px; padding-right: 17px; }
.status .product { flex: 1; font-size: 13px; }
.status .mode { width: 114px; }
.status .units { width: 76px; gap: 15px; font-size: 13px; }
.units svg { width: 6px; height: 4px; }
.help { width: 14px; height: 14px; margin-right: 58px; }
```
